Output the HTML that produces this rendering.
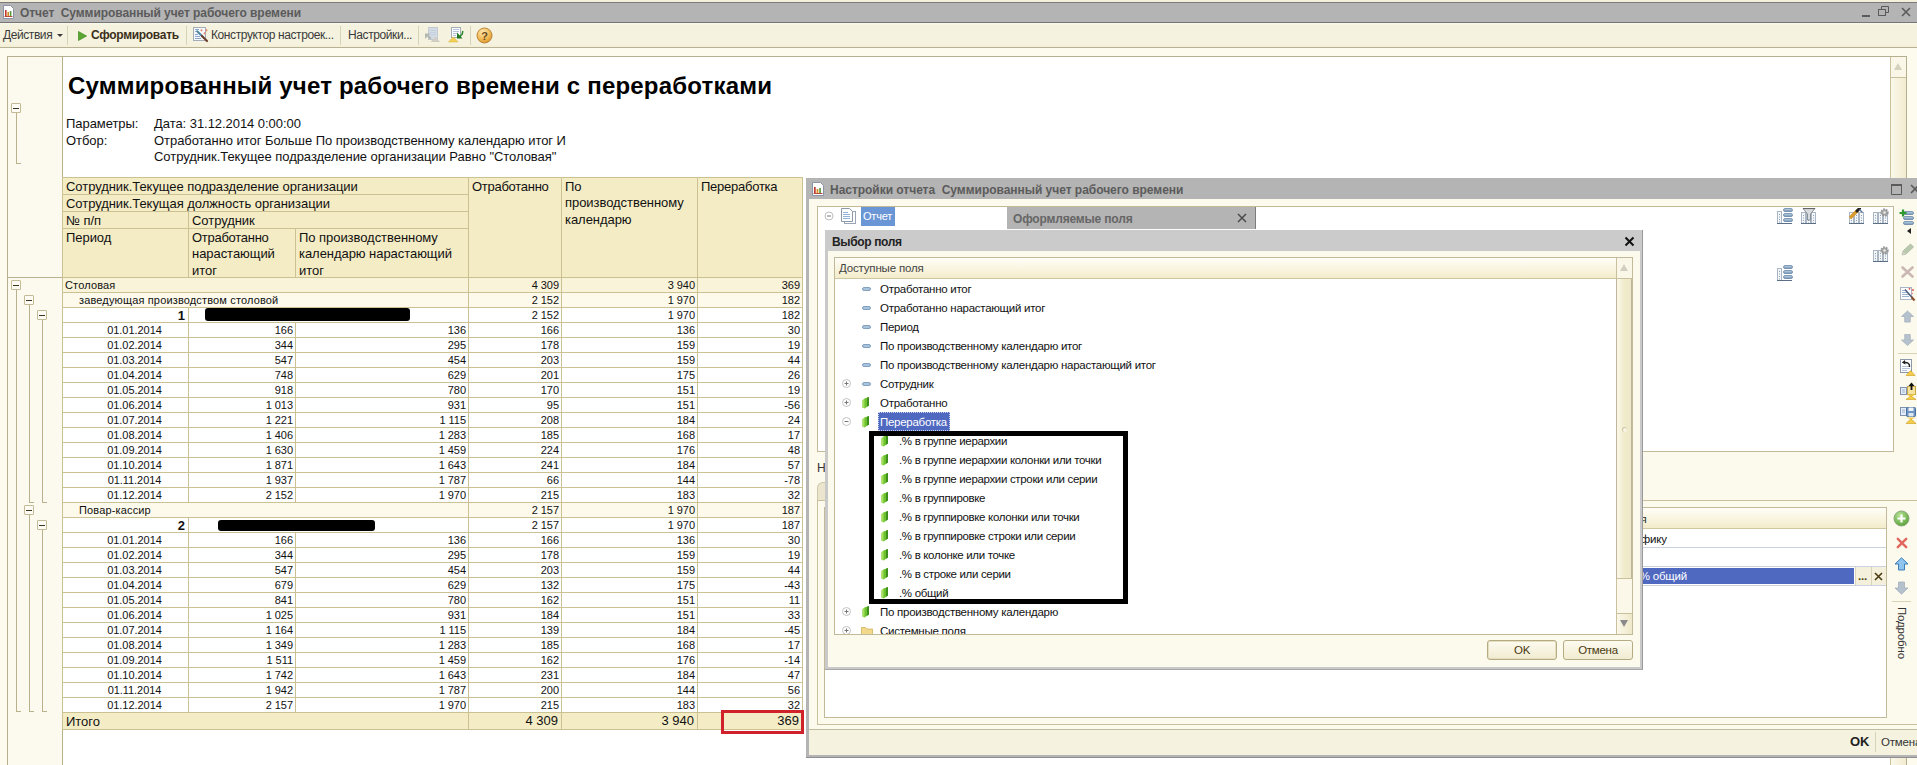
<!DOCTYPE html><html lang="ru"><head><meta charset="utf-8"><title>Отчет</title>
<style>
html,body{margin:0;padding:0}
body{width:1917px;height:765px;overflow:hidden;position:relative;background:#fcf9ed;font-family:"Liberation Sans","DejaVu Sans",sans-serif;font-size:11px;color:#000}
div,i,span,svg{position:absolute;display:block;box-sizing:border-box}
i.h{height:1px;z-index:2}
i.v{width:1px;z-index:2}
.ui{font-family:"Liberation Sans","DejaVu Sans",sans-serif;font-size:11.5px;letter-spacing:-0.17px;white-space:nowrap;color:#2b2b2b;line-height:14px}
#rep{left:0;top:0;width:1917px;height:765px}
.hd{background:#f4ecc5;z-index:1}
.bg{z-index:1}
.ht{z-index:3;font-size:13px;line-height:16.3px;white-space:nowrap;color:#111;letter-spacing:-0.05px}
.t{z-index:3;font-size:11px;line-height:13px;white-space:nowrap;color:#111;letter-spacing:0.15px}
.n{z-index:3;font-size:11px;line-height:13px;white-space:nowrap;text-align:right;color:#111;letter-spacing:-0.05px}
.nb{z-index:3;font-size:13px;line-height:13px;font-weight:bold;white-space:nowrap;text-align:right;color:#111}
.d{z-index:3;font-size:11px;line-height:13px;white-space:nowrap;text-align:center;padding-left:19px;color:#111;letter-spacing:-0.05px}
.tn{z-index:3;font-size:13px;line-height:16px;white-space:nowrap;text-align:right;color:#111}
.blk{z-index:3;background:#000;border-radius:3px}
.red{z-index:3;border:3px solid #d0222a}
.box{width:10px;height:10px;border:1px solid #c3ba96;background:#fdfbf3;border-radius:1px}
.box:after{content:"";position:absolute;left:1px;top:4px;width:6px;height:1px;background:#3a3520}
.tl{background:#b9b08c}
.f{font-size:11.5px;letter-spacing:-0.27px}

</style></head><body>
<!-- main window title bar -->
<div style="left:0;top:0;width:1917px;height:2px;background:#f3efda"></div>
<div style="left:0;top:2px;width:1917px;height:21px;background:#b4b4b4;border-top:1px solid #7a7a7a;border-bottom:1px solid #767676"></div>
<svg style="left:3px;top:5px" width="11" height="14" viewBox="0 0 11 14"><path d="M0.5 0.5h7l3 3v10h-10z" fill="#fff" stroke="#8a93a8"/><rect x="2" y="5" width="1.6" height="6" fill="#c0392b"/><rect x="4.4" y="7" width="1.6" height="4" fill="#d98b1e"/><rect x="6.8" y="6" width="1.6" height="5" fill="#5a9a3c"/><rect x="1.5" y="11" width="8" height="1" fill="#b84a3a"/></svg>
<div class="ui" style="left:20px;top:6px;font-size:12px;color:#5b5b5b;font-weight:bold;letter-spacing:-0.07px">Отчет&nbsp; Суммированный учет рабочего времени</div>
<!-- window buttons -->
<div style="left:1862px;top:15px;width:8px;height:2px;background:#5a5a5a"></div>
<svg style="left:1878px;top:6px" width="12" height="11" viewBox="0 0 12 11"><path d="M3.5 0.5h7v6h-7z M0.5 3.5h7v6h-7z" fill="none" stroke="#5a5a5a"/><rect x="1" y="4" width="6" height="5" fill="#b4b4b4"/><path d="M0.5 3.5h7v6h-7z" fill="none" stroke="#5a5a5a"/></svg>
<svg style="left:1901px;top:7px" width="10" height="10" viewBox="0 0 10 10"><path d="M1 1l8 8M9 1l-8 8" stroke="#5a5a5a" stroke-width="1.6"/></svg>
<!-- toolbar -->
<div style="left:0;top:23px;width:1917px;height:25px;background:linear-gradient(#fbf9ee 0,#f5f3df 2px,#f5f3df 20px,#f4efd9 24px);border-bottom:1px solid #b7b293"></div>
<div class="ui" style="left:3px;top:28px;color:#3a3a3a;font-size:12px;letter-spacing:-0.42px">Действия</div>
<div style="left:57px;top:34px;width:0;height:0;border-left:3px solid transparent;border-right:3px solid transparent;border-top:3px solid #3a3a3a"></div>
<i class="v" style="left:67px;top:26px;height:19px;background:#d8d2b6"></i>
<svg style="left:78px;top:31px" width="9" height="10" viewBox="0 0 10 11"><path d="M0.5 0.5l9 5l-9 5z" fill="#5aa832" stroke="#3f8a22" stroke-width="0.8"/></svg>
<div class="ui" style="left:91px;top:28px;font-weight:bold;color:#3b2f1a;font-size:12px;letter-spacing:-0.3px">Сформировать</div>
<i class="v" style="left:186px;top:26px;height:19px;background:#d8d2b6"></i>
<svg style="left:192px;top:26px" width="17" height="17" viewBox="0 0 17 17"><rect x="1.500" y="1.500" width="12" height="13" fill="#f6f9fc" stroke="#a3adb8"/><path d="M3 3.500h4M3 5.500h1.500M3 8.500h3M3 10.500h5M3 12.500h6" stroke="#8ea6cc" stroke-width="1"/><path d="M5.200 5.200l5 5" stroke="#4f86a0" stroke-width="2" stroke-linecap="round"/><path d="M10 10l5 5" stroke="#6b4030" stroke-width="2.200" stroke-linecap="round"/><path d="M9.500 3.200v2.200M8.400 4.300h2.200M14.500 3.200v2.200M13.400 4.300h2.200M12.500 6.200v2.200M11.400 7.300h2.200" stroke="#e8846c" stroke-width="0.900"/></svg>
<div class="ui" style="left:211px;top:28px;color:#3a3a3a;font-size:12px;letter-spacing:-0.4px">Конструктор настроек...</div>
<i class="v" style="left:340px;top:26px;height:19px;background:#d8d2b6"></i>
<div class="ui" style="left:348px;top:28px;color:#3a3a3a;font-size:12px;letter-spacing:-0.4px">Настройки...</div>
<i class="v" style="left:418px;top:26px;height:19px;background:#d8d2b6"></i>
<svg style="left:424px;top:26px" width="17" height="17" viewBox="0 0 17 17"><rect x="4.500" y="1.500" width="9" height="12" fill="#d3dbe4" stroke="#c3c9d0"/><path d="M6 4.500h6M6 6.500h6M6 8.500h6" stroke="#c4d0de"/><path d="M1 7.500h5.500l-1.800 1.800l2.800 2.800l-1.500 1.500l-2.800-2.800l-2.200 2.200z" fill="#b3b8b3"/><path d="M6.500 16l4.800-5.200l4.800 5.200z" fill="#cfccc2"/></svg>
<svg style="left:448px;top:26px" width="17" height="17" viewBox="0 0 17 17"><rect x="3.500" y="1.500" width="9" height="10" fill="#fbfcfe" stroke="#a3adb8"/><path d="M5 3.500h6M5 5.500h6M5 7.500h4M5 9.500h3" stroke="#b8c4dc"/><path d="M0.500 16l4.800-5.200l4.800 5.200z" fill="#f3cf55" stroke="#d9b23a" stroke-width="0.500"/><path d="M14.800 5l-0.600 3.200l-3 3" stroke="#2f8a2f" stroke-width="1.600" fill="none"/><path d="M9 6.500l5.500 6h-5.500z" fill="#1f7a1f"/></svg>
<i class="v" style="left:470px;top:26px;height:19px;background:#d8d2b6"></i>
<svg style="left:476px;top:27px" width="17" height="17" viewBox="0 0 17 17"><defs><radialGradient id="qg" cx="0.4" cy="0.3" r="0.8"><stop offset="0" stop-color="#fde9b5"/><stop offset="0.6" stop-color="#f0b64e"/><stop offset="1" stop-color="#d18a25"/></radialGradient></defs><circle cx="8.500" cy="8.500" r="7.500" fill="url(#qg)" stroke="#b9853a"/><text x="8.500" y="12.500" font-family="Liberation Sans, sans-serif" font-size="11" font-weight="bold" text-anchor="middle" fill="#6b4a1a">?</text></svg>
<!-- area between toolbar and panel -->
<div style="left:0;top:48px;width:1917px;height:717px;background:#fdfaee"></div>
<!-- report panel -->
<div style="left:7px;top:56px;width:1900px;height:720px;border:1px solid #b5af92;background:#fff"></div>
<div style="left:8px;top:57px;width:54px;height:708px;background:#fcf9ee"></div>
<i class="v" style="left:62px;top:57px;height:708px;background:#b9b08c"></i>
<i class="h" style="left:8px;top:277px;width:54px;background:#b9b08c"></i>
<!-- vertical scrollbar of report -->
<div style="left:1890px;top:57px;width:16px;height:708px;background:linear-gradient(90deg,#fbf8ea,#f1ebcf);border-left:1px solid #c9c19e"></div>
<div style="left:1890px;top:57px;width:16px;height:21px;background:#faf7e9;border-left:1px solid #c9c19e;border-bottom:1px solid #c9c19e"></div>
<div style="left:1894px;top:63px;width:0;height:0;border-left:4px solid transparent;border-right:4px solid transparent;border-bottom:7px solid #d6d1bd"></div>
<!-- report title -->
<div style="left:68px;top:72px;font-size:24px;line-height:28px;font-weight:bold;white-space:nowrap;color:#000;letter-spacing:0.19px">Суммированный учет рабочего времени с переработками</div>
<div class="ht" style="left:66px;top:116px">Параметры:</div>
<div class="ht" style="left:154px;top:116px">Дата: 31.12.2014 0:00:00</div>
<div class="ht" style="left:66px;top:133px">Отбор:</div>
<div class="ht" style="left:154px;top:133px">Отработанно итог Больше По производственному календарю итог И<br>Сотрудник.Текущее подразделение организации Равно "Столовая"</div>
<!-- gutter tree -->
<div class="box" style="left:11px;top:103px"></div>
<i class="v tl" style="left:16px;top:113px;height:51px"></i><i class="h tl" style="left:16px;top:163px;width:5px"></i>
<div class="box" style="left:11px;top:280px"></div>
<i class="v tl" style="left:16px;top:290px;height:422px"></i><i class="h tl" style="left:16px;top:711px;width:5px"></i>
<div class="box" style="left:24px;top:295px"></div>
<i class="v tl" style="left:29px;top:305px;height:198px"></i><i class="h tl" style="left:29px;top:502px;width:5px"></i>
<div class="box" style="left:37px;top:310px"></div>
<i class="v tl" style="left:42px;top:320px;height:183px"></i><i class="h tl" style="left:42px;top:502px;width:5px"></i>
<div class="box" style="left:24px;top:505px"></div>
<i class="v tl" style="left:29px;top:515px;height:197px"></i><i class="h tl" style="left:29px;top:711px;width:5px"></i>
<div class="box" style="left:37px;top:520px"></div>
<i class="v tl" style="left:42px;top:530px;height:182px"></i><i class="h tl" style="left:42px;top:711px;width:5px"></i>

<div id="rep">
<div class="hd" style="left:62px;top:177px;width:740px;height:100px"></div>
<i class="h" style="left:62px;top:177px;width:741px;background:#cbc193"></i>
<i class="h" style="left:62px;top:194px;width:406px;background:#cbc193"></i>
<i class="h" style="left:62px;top:211px;width:406px;background:#cbc193"></i>
<i class="h" style="left:62px;top:228px;width:406px;background:#cbc193"></i>
<i class="h" style="left:62px;top:277px;width:741px;background:#cbc193"></i>
<i class="v" style="left:62px;top:177px;height:553px;background:#cbc193"></i>
<i class="v" style="left:188px;top:211px;height:66px;background:#cbc193"></i>
<i class="v" style="left:295px;top:228px;height:49px;background:#cbc193"></i>
<i class="v" style="left:468px;top:177px;height:553px;background:#cbc193"></i>
<i class="v" style="left:561px;top:177px;height:553px;background:#cbc193"></i>
<i class="v" style="left:697px;top:177px;height:553px;background:#cbc193"></i>
<i class="v" style="left:802px;top:177px;height:553px;background:#cbc193"></i>
<div class="ht" style="left:66px;top:179px;">Сотрудник.Текущее подразделение организации</div>
<div class="ht" style="left:66px;top:196px;">Сотрудник.Текущая должность организации</div>
<div class="ht" style="left:66px;top:213px;">№ п/п</div>
<div class="ht" style="left:192px;top:213px;">Сотрудник</div>
<div class="ht" style="left:66px;top:230px;">Период</div>
<div class="ht" style="left:192px;top:230px;"><span style="position:static;display:inline;letter-spacing:-0.27px">Отработанно</span><br>нарастающий<br>итог</div>
<div class="ht" style="left:299px;top:230px;">По производственному<br>календарю нарастающий<br>итог</div>
<div class="ht" style="left:472px;top:179px;letter-spacing:-0.27px;">Отработанно</div>
<div class="ht" style="left:565px;top:179px;">По<br>производственному<br>календарю</div>
<div class="ht" style="left:701px;top:179px;letter-spacing:-0.25px;">Переработка</div>
<div class="bg" style="left:62px;top:277px;width:740px;height:15px;background:#f9f3d9"></div>
<div class="t" style="left:65px;top:279px">Столовая</div>
<div class="n" style="left:439px;top:279px;width:120px">4 309</div>
<div class="n" style="left:575px;top:279px;width:120px">3 940</div>
<div class="n" style="left:680px;top:279px;width:120px">369</div>
<i class="h" style="left:62px;top:292px;width:741px;background:#cbc193"></i>
<div class="bg" style="left:62px;top:292px;width:740px;height:15px;background:#fdfaec"></div>
<div class="t" style="left:79px;top:294px">заведующая производством столовой</div>
<div class="n" style="left:439px;top:294px;width:120px">2 152</div>
<div class="n" style="left:575px;top:294px;width:120px">1 970</div>
<div class="n" style="left:680px;top:294px;width:120px">182</div>
<i class="h" style="left:62px;top:307px;width:741px;background:#cbc193"></i>
<div class="nb" style="left:65px;top:309px;width:120px">1</div>
<div class="blk" style="left:205px;top:308px;width:205px;height:13px"></div>
<div class="n" style="left:439px;top:309px;width:120px">2 152</div>
<div class="n" style="left:575px;top:309px;width:120px">1 970</div>
<div class="n" style="left:680px;top:309px;width:120px">182</div>
<i class="h" style="left:62px;top:322px;width:741px;background:#cbc193"></i>
<i class="v" style="left:188px;top:307px;height:15px;background:#cbc193"></i>
<div class="d" style="left:62px;top:324px;width:126px">01.01.2014</div>
<div class="n" style="left:173px;top:324px;width:120px">166</div>
<div class="n" style="left:346px;top:324px;width:120px">136</div>
<div class="n" style="left:439px;top:324px;width:120px">166</div>
<div class="n" style="left:575px;top:324px;width:120px">136</div>
<div class="n" style="left:680px;top:324px;width:120px">30</div>
<i class="h" style="left:62px;top:337px;width:741px;background:#cbc193"></i>
<i class="v" style="left:188px;top:322px;height:15px;background:#cbc193"></i>
<i class="v" style="left:295px;top:322px;height:15px;background:#cbc193"></i>
<div class="d" style="left:62px;top:339px;width:126px">01.02.2014</div>
<div class="n" style="left:173px;top:339px;width:120px">344</div>
<div class="n" style="left:346px;top:339px;width:120px">295</div>
<div class="n" style="left:439px;top:339px;width:120px">178</div>
<div class="n" style="left:575px;top:339px;width:120px">159</div>
<div class="n" style="left:680px;top:339px;width:120px">19</div>
<i class="h" style="left:62px;top:352px;width:741px;background:#cbc193"></i>
<i class="v" style="left:188px;top:337px;height:15px;background:#cbc193"></i>
<i class="v" style="left:295px;top:337px;height:15px;background:#cbc193"></i>
<div class="d" style="left:62px;top:354px;width:126px">01.03.2014</div>
<div class="n" style="left:173px;top:354px;width:120px">547</div>
<div class="n" style="left:346px;top:354px;width:120px">454</div>
<div class="n" style="left:439px;top:354px;width:120px">203</div>
<div class="n" style="left:575px;top:354px;width:120px">159</div>
<div class="n" style="left:680px;top:354px;width:120px">44</div>
<i class="h" style="left:62px;top:367px;width:741px;background:#cbc193"></i>
<i class="v" style="left:188px;top:352px;height:15px;background:#cbc193"></i>
<i class="v" style="left:295px;top:352px;height:15px;background:#cbc193"></i>
<div class="d" style="left:62px;top:369px;width:126px">01.04.2014</div>
<div class="n" style="left:173px;top:369px;width:120px">748</div>
<div class="n" style="left:346px;top:369px;width:120px">629</div>
<div class="n" style="left:439px;top:369px;width:120px">201</div>
<div class="n" style="left:575px;top:369px;width:120px">175</div>
<div class="n" style="left:680px;top:369px;width:120px">26</div>
<i class="h" style="left:62px;top:382px;width:741px;background:#cbc193"></i>
<i class="v" style="left:188px;top:367px;height:15px;background:#cbc193"></i>
<i class="v" style="left:295px;top:367px;height:15px;background:#cbc193"></i>
<div class="d" style="left:62px;top:384px;width:126px">01.05.2014</div>
<div class="n" style="left:173px;top:384px;width:120px">918</div>
<div class="n" style="left:346px;top:384px;width:120px">780</div>
<div class="n" style="left:439px;top:384px;width:120px">170</div>
<div class="n" style="left:575px;top:384px;width:120px">151</div>
<div class="n" style="left:680px;top:384px;width:120px">19</div>
<i class="h" style="left:62px;top:397px;width:741px;background:#cbc193"></i>
<i class="v" style="left:188px;top:382px;height:15px;background:#cbc193"></i>
<i class="v" style="left:295px;top:382px;height:15px;background:#cbc193"></i>
<div class="d" style="left:62px;top:399px;width:126px">01.06.2014</div>
<div class="n" style="left:173px;top:399px;width:120px">1 013</div>
<div class="n" style="left:346px;top:399px;width:120px">931</div>
<div class="n" style="left:439px;top:399px;width:120px">95</div>
<div class="n" style="left:575px;top:399px;width:120px">151</div>
<div class="n" style="left:680px;top:399px;width:120px">-56</div>
<i class="h" style="left:62px;top:412px;width:741px;background:#cbc193"></i>
<i class="v" style="left:188px;top:397px;height:15px;background:#cbc193"></i>
<i class="v" style="left:295px;top:397px;height:15px;background:#cbc193"></i>
<div class="d" style="left:62px;top:414px;width:126px">01.07.2014</div>
<div class="n" style="left:173px;top:414px;width:120px">1 221</div>
<div class="n" style="left:346px;top:414px;width:120px">1 115</div>
<div class="n" style="left:439px;top:414px;width:120px">208</div>
<div class="n" style="left:575px;top:414px;width:120px">184</div>
<div class="n" style="left:680px;top:414px;width:120px">24</div>
<i class="h" style="left:62px;top:427px;width:741px;background:#cbc193"></i>
<i class="v" style="left:188px;top:412px;height:15px;background:#cbc193"></i>
<i class="v" style="left:295px;top:412px;height:15px;background:#cbc193"></i>
<div class="d" style="left:62px;top:429px;width:126px">01.08.2014</div>
<div class="n" style="left:173px;top:429px;width:120px">1 406</div>
<div class="n" style="left:346px;top:429px;width:120px">1 283</div>
<div class="n" style="left:439px;top:429px;width:120px">185</div>
<div class="n" style="left:575px;top:429px;width:120px">168</div>
<div class="n" style="left:680px;top:429px;width:120px">17</div>
<i class="h" style="left:62px;top:442px;width:741px;background:#cbc193"></i>
<i class="v" style="left:188px;top:427px;height:15px;background:#cbc193"></i>
<i class="v" style="left:295px;top:427px;height:15px;background:#cbc193"></i>
<div class="d" style="left:62px;top:444px;width:126px">01.09.2014</div>
<div class="n" style="left:173px;top:444px;width:120px">1 630</div>
<div class="n" style="left:346px;top:444px;width:120px">1 459</div>
<div class="n" style="left:439px;top:444px;width:120px">224</div>
<div class="n" style="left:575px;top:444px;width:120px">176</div>
<div class="n" style="left:680px;top:444px;width:120px">48</div>
<i class="h" style="left:62px;top:457px;width:741px;background:#cbc193"></i>
<i class="v" style="left:188px;top:442px;height:15px;background:#cbc193"></i>
<i class="v" style="left:295px;top:442px;height:15px;background:#cbc193"></i>
<div class="d" style="left:62px;top:459px;width:126px">01.10.2014</div>
<div class="n" style="left:173px;top:459px;width:120px">1 871</div>
<div class="n" style="left:346px;top:459px;width:120px">1 643</div>
<div class="n" style="left:439px;top:459px;width:120px">241</div>
<div class="n" style="left:575px;top:459px;width:120px">184</div>
<div class="n" style="left:680px;top:459px;width:120px">57</div>
<i class="h" style="left:62px;top:472px;width:741px;background:#cbc193"></i>
<i class="v" style="left:188px;top:457px;height:15px;background:#cbc193"></i>
<i class="v" style="left:295px;top:457px;height:15px;background:#cbc193"></i>
<div class="d" style="left:62px;top:474px;width:126px">01.11.2014</div>
<div class="n" style="left:173px;top:474px;width:120px">1 937</div>
<div class="n" style="left:346px;top:474px;width:120px">1 787</div>
<div class="n" style="left:439px;top:474px;width:120px">66</div>
<div class="n" style="left:575px;top:474px;width:120px">144</div>
<div class="n" style="left:680px;top:474px;width:120px">-78</div>
<i class="h" style="left:62px;top:487px;width:741px;background:#cbc193"></i>
<i class="v" style="left:188px;top:472px;height:15px;background:#cbc193"></i>
<i class="v" style="left:295px;top:472px;height:15px;background:#cbc193"></i>
<div class="d" style="left:62px;top:489px;width:126px">01.12.2014</div>
<div class="n" style="left:173px;top:489px;width:120px">2 152</div>
<div class="n" style="left:346px;top:489px;width:120px">1 970</div>
<div class="n" style="left:439px;top:489px;width:120px">215</div>
<div class="n" style="left:575px;top:489px;width:120px">183</div>
<div class="n" style="left:680px;top:489px;width:120px">32</div>
<i class="h" style="left:62px;top:502px;width:741px;background:#cbc193"></i>
<i class="v" style="left:188px;top:487px;height:15px;background:#cbc193"></i>
<i class="v" style="left:295px;top:487px;height:15px;background:#cbc193"></i>
<div class="bg" style="left:62px;top:502px;width:740px;height:15px;background:#fdfaec"></div>
<div class="t" style="left:79px;top:504px">Повар-кассир</div>
<div class="n" style="left:439px;top:504px;width:120px">2 157</div>
<div class="n" style="left:575px;top:504px;width:120px">1 970</div>
<div class="n" style="left:680px;top:504px;width:120px">187</div>
<i class="h" style="left:62px;top:517px;width:741px;background:#cbc193"></i>
<div class="nb" style="left:65px;top:519px;width:120px">2</div>
<div class="blk" style="left:218px;top:520px;width:157px;height:11px"></div>
<div class="n" style="left:439px;top:519px;width:120px">2 157</div>
<div class="n" style="left:575px;top:519px;width:120px">1 970</div>
<div class="n" style="left:680px;top:519px;width:120px">187</div>
<i class="h" style="left:62px;top:532px;width:741px;background:#cbc193"></i>
<i class="v" style="left:188px;top:517px;height:15px;background:#cbc193"></i>
<div class="d" style="left:62px;top:534px;width:126px">01.01.2014</div>
<div class="n" style="left:173px;top:534px;width:120px">166</div>
<div class="n" style="left:346px;top:534px;width:120px">136</div>
<div class="n" style="left:439px;top:534px;width:120px">166</div>
<div class="n" style="left:575px;top:534px;width:120px">136</div>
<div class="n" style="left:680px;top:534px;width:120px">30</div>
<i class="h" style="left:62px;top:547px;width:741px;background:#cbc193"></i>
<i class="v" style="left:188px;top:532px;height:15px;background:#cbc193"></i>
<i class="v" style="left:295px;top:532px;height:15px;background:#cbc193"></i>
<div class="d" style="left:62px;top:549px;width:126px">01.02.2014</div>
<div class="n" style="left:173px;top:549px;width:120px">344</div>
<div class="n" style="left:346px;top:549px;width:120px">295</div>
<div class="n" style="left:439px;top:549px;width:120px">178</div>
<div class="n" style="left:575px;top:549px;width:120px">159</div>
<div class="n" style="left:680px;top:549px;width:120px">19</div>
<i class="h" style="left:62px;top:562px;width:741px;background:#cbc193"></i>
<i class="v" style="left:188px;top:547px;height:15px;background:#cbc193"></i>
<i class="v" style="left:295px;top:547px;height:15px;background:#cbc193"></i>
<div class="d" style="left:62px;top:564px;width:126px">01.03.2014</div>
<div class="n" style="left:173px;top:564px;width:120px">547</div>
<div class="n" style="left:346px;top:564px;width:120px">454</div>
<div class="n" style="left:439px;top:564px;width:120px">203</div>
<div class="n" style="left:575px;top:564px;width:120px">159</div>
<div class="n" style="left:680px;top:564px;width:120px">44</div>
<i class="h" style="left:62px;top:577px;width:741px;background:#cbc193"></i>
<i class="v" style="left:188px;top:562px;height:15px;background:#cbc193"></i>
<i class="v" style="left:295px;top:562px;height:15px;background:#cbc193"></i>
<div class="d" style="left:62px;top:579px;width:126px">01.04.2014</div>
<div class="n" style="left:173px;top:579px;width:120px">679</div>
<div class="n" style="left:346px;top:579px;width:120px">629</div>
<div class="n" style="left:439px;top:579px;width:120px">132</div>
<div class="n" style="left:575px;top:579px;width:120px">175</div>
<div class="n" style="left:680px;top:579px;width:120px">-43</div>
<i class="h" style="left:62px;top:592px;width:741px;background:#cbc193"></i>
<i class="v" style="left:188px;top:577px;height:15px;background:#cbc193"></i>
<i class="v" style="left:295px;top:577px;height:15px;background:#cbc193"></i>
<div class="d" style="left:62px;top:594px;width:126px">01.05.2014</div>
<div class="n" style="left:173px;top:594px;width:120px">841</div>
<div class="n" style="left:346px;top:594px;width:120px">780</div>
<div class="n" style="left:439px;top:594px;width:120px">162</div>
<div class="n" style="left:575px;top:594px;width:120px">151</div>
<div class="n" style="left:680px;top:594px;width:120px">11</div>
<i class="h" style="left:62px;top:607px;width:741px;background:#cbc193"></i>
<i class="v" style="left:188px;top:592px;height:15px;background:#cbc193"></i>
<i class="v" style="left:295px;top:592px;height:15px;background:#cbc193"></i>
<div class="d" style="left:62px;top:609px;width:126px">01.06.2014</div>
<div class="n" style="left:173px;top:609px;width:120px">1 025</div>
<div class="n" style="left:346px;top:609px;width:120px">931</div>
<div class="n" style="left:439px;top:609px;width:120px">184</div>
<div class="n" style="left:575px;top:609px;width:120px">151</div>
<div class="n" style="left:680px;top:609px;width:120px">33</div>
<i class="h" style="left:62px;top:622px;width:741px;background:#cbc193"></i>
<i class="v" style="left:188px;top:607px;height:15px;background:#cbc193"></i>
<i class="v" style="left:295px;top:607px;height:15px;background:#cbc193"></i>
<div class="d" style="left:62px;top:624px;width:126px">01.07.2014</div>
<div class="n" style="left:173px;top:624px;width:120px">1 164</div>
<div class="n" style="left:346px;top:624px;width:120px">1 115</div>
<div class="n" style="left:439px;top:624px;width:120px">139</div>
<div class="n" style="left:575px;top:624px;width:120px">184</div>
<div class="n" style="left:680px;top:624px;width:120px">-45</div>
<i class="h" style="left:62px;top:637px;width:741px;background:#cbc193"></i>
<i class="v" style="left:188px;top:622px;height:15px;background:#cbc193"></i>
<i class="v" style="left:295px;top:622px;height:15px;background:#cbc193"></i>
<div class="d" style="left:62px;top:639px;width:126px">01.08.2014</div>
<div class="n" style="left:173px;top:639px;width:120px">1 349</div>
<div class="n" style="left:346px;top:639px;width:120px">1 283</div>
<div class="n" style="left:439px;top:639px;width:120px">185</div>
<div class="n" style="left:575px;top:639px;width:120px">168</div>
<div class="n" style="left:680px;top:639px;width:120px">17</div>
<i class="h" style="left:62px;top:652px;width:741px;background:#cbc193"></i>
<i class="v" style="left:188px;top:637px;height:15px;background:#cbc193"></i>
<i class="v" style="left:295px;top:637px;height:15px;background:#cbc193"></i>
<div class="d" style="left:62px;top:654px;width:126px">01.09.2014</div>
<div class="n" style="left:173px;top:654px;width:120px">1 511</div>
<div class="n" style="left:346px;top:654px;width:120px">1 459</div>
<div class="n" style="left:439px;top:654px;width:120px">162</div>
<div class="n" style="left:575px;top:654px;width:120px">176</div>
<div class="n" style="left:680px;top:654px;width:120px">-14</div>
<i class="h" style="left:62px;top:667px;width:741px;background:#cbc193"></i>
<i class="v" style="left:188px;top:652px;height:15px;background:#cbc193"></i>
<i class="v" style="left:295px;top:652px;height:15px;background:#cbc193"></i>
<div class="d" style="left:62px;top:669px;width:126px">01.10.2014</div>
<div class="n" style="left:173px;top:669px;width:120px">1 742</div>
<div class="n" style="left:346px;top:669px;width:120px">1 643</div>
<div class="n" style="left:439px;top:669px;width:120px">231</div>
<div class="n" style="left:575px;top:669px;width:120px">184</div>
<div class="n" style="left:680px;top:669px;width:120px">47</div>
<i class="h" style="left:62px;top:682px;width:741px;background:#cbc193"></i>
<i class="v" style="left:188px;top:667px;height:15px;background:#cbc193"></i>
<i class="v" style="left:295px;top:667px;height:15px;background:#cbc193"></i>
<div class="d" style="left:62px;top:684px;width:126px">01.11.2014</div>
<div class="n" style="left:173px;top:684px;width:120px">1 942</div>
<div class="n" style="left:346px;top:684px;width:120px">1 787</div>
<div class="n" style="left:439px;top:684px;width:120px">200</div>
<div class="n" style="left:575px;top:684px;width:120px">144</div>
<div class="n" style="left:680px;top:684px;width:120px">56</div>
<i class="h" style="left:62px;top:697px;width:741px;background:#cbc193"></i>
<i class="v" style="left:188px;top:682px;height:15px;background:#cbc193"></i>
<i class="v" style="left:295px;top:682px;height:15px;background:#cbc193"></i>
<div class="d" style="left:62px;top:699px;width:126px">01.12.2014</div>
<div class="n" style="left:173px;top:699px;width:120px">2 157</div>
<div class="n" style="left:346px;top:699px;width:120px">1 970</div>
<div class="n" style="left:439px;top:699px;width:120px">215</div>
<div class="n" style="left:575px;top:699px;width:120px">183</div>
<div class="n" style="left:680px;top:699px;width:120px">32</div>
<i class="h" style="left:62px;top:712px;width:741px;background:#cbc193"></i>
<i class="v" style="left:188px;top:697px;height:15px;background:#cbc193"></i>
<i class="v" style="left:295px;top:697px;height:15px;background:#cbc193"></i>
<div class="bg" style="left:62px;top:712px;width:740px;height:17px;background:#f4ecc5"></div>
<div class="ht" style="left:66px;top:714px">Итого</div>
<div class="tn" style="left:438px;top:713px;width:120px">4 309</div>
<div class="tn" style="left:574px;top:713px;width:120px">3 940</div>
<div class="tn" style="left:679px;top:713px;width:120px">369</div>
<i class="h" style="left:62px;top:729px;width:741px;background:#cbc193"></i>
<div class="red" style="left:721px;top:710px;width:83px;height:24px"></div>
</div>
<!-- ============ settings dialog ============ -->
<div id="dlg" style="left:806px;top:178px;width:1120px;height:580px;background:#fcf9ed;border:3px solid #b4b4b4;z-index:10"></div>
<div style="left:806px;top:178px;width:1111px;height:21px;background:#b4b4b4;z-index:11"></div>
<svg style="left:812px;top:182px;z-index:12" width="12" height="14" viewBox="0 0 12 14"><path d="M0.5 0.5h8l3 3v10h-11z" fill="#fff" stroke="#8a93a8"/><rect x="2" y="5" width="1.700" height="6" fill="#c0392b"/><rect x="4.600" y="7" width="1.700" height="4" fill="#d98b1e"/><rect x="7.200" y="6" width="1.700" height="5" fill="#5a9a3c"/><rect x="1.500" y="11" width="9" height="1" fill="#b84a3a"/></svg>
<div class="ui" style="left:830px;top:183px;font-size:12px;color:#5b5b5b;font-weight:bold;letter-spacing:-0.03px;z-index:12">Настройки отчета&nbsp; Суммированный учет рабочего времени</div>
<svg style="left:1891px;top:184px;z-index:12" width="12" height="11" viewBox="0 0 12 11"><path d="M0.5 1h10v9.500h-10z" fill="none" stroke="#5a5a5a" stroke-width="1"/><path d="M0 1h11" stroke="#5a5a5a" stroke-width="2"/></svg>
<svg style="left:1910px;top:184px;z-index:12" width="10" height="10" viewBox="0 0 10 10"><path d="M1 1l8 8M9 1l-8 8" stroke="#5a5a5a" stroke-width="1.600"/></svg>

<!-- structure panel -->
<div style="left:817px;top:206px;width:1077px;height:246px;background:#fff;border:1px solid #c2b998;z-index:11"></div>
<!-- Отчет node -->
<svg style="left:824px;top:211px;z-index:12" width="10" height="10" viewBox="0 0 10 10"><circle cx="5" cy="5" r="4" fill="#fff" stroke="#bdbdbd"/><path d="M3 5h4" stroke="#777" stroke-width="1"/></svg>
<svg style="left:841px;top:208px;z-index:12" width="16" height="17" viewBox="0 0 16 17"><rect x="3.500" y="3.500" width="11" height="12" fill="#fff" stroke="#9aa4b4"/><path d="M0.500 0.500h8l3 3v10h-11z" fill="#fff" stroke="#8c97a8"/><path d="M2 4.500h5M2 6.500h7M2 8.500h7M2 10.500h7" stroke="#8fb0d8" stroke-width="1"/></svg>
<div style="left:861px;top:207px;width:34px;height:19px;background:#6b96d6;z-index:12"></div>
<div class="ui" style="left:863px;top:209px;color:#fff;z-index:13;font-size:11px;letter-spacing:-0.2px">Отчет</div>
<!-- tab Оформляемые поля -->
<div style="left:1007px;top:207px;width:249px;height:22px;background:#b4b4b4;border-right:1px solid #7d7d7d;z-index:12"></div>
<div class="ui" style="left:1013px;top:212px;font-size:12px;font-weight:bold;color:#666;letter-spacing:-0.17px;z-index:13">Оформляемые поля</div>
<svg style="left:1237px;top:213px;z-index:13" width="10" height="10" viewBox="0 0 10 10"><path d="M1 1l8 8M9 1l-8 8" stroke="#4a4a4a" stroke-width="1.500"/></svg>

<!-- label and lower tab page -->
<div class="ui" style="left:817px;top:461px;z-index:11;color:#333;font-size:12px">Настройки:</div>
<div style="left:817px;top:482px;width:90px;height:19px;background:#ebe5cd;border:1px solid #cfc8a8;border-bottom:none;border-radius:6px 6px 0 0;z-index:11"></div>
<div style="left:817px;top:500px;width:1110px;height:225px;border:1px solid #c9c19e;background:#fcf9ed;z-index:11"></div>
<div style="left:824px;top:507px;width:1063px;height:211px;background:#fff;border:1px solid #c2b998;z-index:12"></div>
<!-- lower table header + rows (visible right of dialog) -->
<div style="left:825px;top:508px;width:1061px;height:21px;background:linear-gradient(#fffef8,#f3eccb);border-bottom:1px solid #cfc7a2;z-index:13"></div>
<div class="ui" style="left:1597px;top:512px;z-index:13;color:#333">Значения</div>
<div class="ui" style="left:1607px;top:532px;z-index:13;color:#111">По графику</div>
<i class="h" style="left:825px;top:547px;width:1061px;background:#c9d3df;z-index:13"></i>
<i class="h" style="left:825px;top:566px;width:1061px;background:#c9d3df;z-index:13"></i>
<div style="left:825px;top:568px;width:1029px;height:16px;background:#4f68c0;z-index:13"></div>
<div class="ui" style="left:1569px;top:569px;z-index:14;color:#fff;letter-spacing:-0.2px">Переработка.% общий</div>
<div style="left:1855px;top:567px;width:16px;height:18px;background:#f4f0dc;border-left:1px solid #d9d3b8;z-index:13"></div>
<div style="left:1871px;top:567px;width:15px;height:18px;background:#f4f0dc;border-left:1px solid #d9d3b8;z-index:13"></div>
<div class="ui" style="left:1858px;top:569px;z-index:14;font-weight:bold;color:#4a3a10">...</div>
<svg style="left:1874px;top:572px;z-index:14" width="9" height="9" viewBox="0 0 9 9"><path d="M1 1l7 7M8 1l-7 7" stroke="#4a3a10" stroke-width="1.600"/></svg>
<i class="h" style="left:825px;top:585px;width:1061px;background:#c9d3df;z-index:13"></i>

<!-- bottom bar -->
<i class="h" style="left:806px;top:757px;width:1111px;background:#8f8f8f;z-index:12"></i>
<div style="left:809px;top:729px;width:1108px;height:26px;background:#f5f3e0;border-top:1px solid #c2bc9c;z-index:11"></div>
<div class="ui" style="left:1850px;top:735px;z-index:12;font-weight:bold;font-size:13px;color:#222">OK</div>
<i class="v" style="left:1875px;top:732px;height:20px;background:#d8d2b6;z-index:12"></i>
<div class="ui" style="left:1881px;top:735px;z-index:12;color:#333">Отмена</div>

<!-- ============ field chooser dialog ============ -->
<div style="left:825px;top:230px;width:818px;height:440px;background:#fcf9ed;border:3px solid #c9c9c9;border-top:none;z-index:20"></div>
<div style="left:825px;top:230px;width:818px;height:21px;background:#cbcbcb;z-index:21"></div>
<div class="ui" style="left:832px;top:235px;font-size:12px;font-weight:bold;color:#222;letter-spacing:-0.36px;z-index:22">Выбор поля</div>
<i class="v" style="left:1642px;top:230px;height:440px;background:#9a9a9a;z-index:22"></i>
<i class="h" style="left:825px;top:669px;width:818px;background:#a6a6a6;z-index:22"></i>
<svg style="left:1624px;top:236px;z-index:22" width="11" height="11" viewBox="0 0 11 11"><path d="M1.500 1.500l8 8M9.500 1.500l-8 8" stroke="#111" stroke-width="2"/></svg>
<div style="left:834px;top:257px;width:799px;height:378px;background:#fff;border:1px solid #c2b998;z-index:21"></div>
<div style="left:835px;top:258px;width:781px;height:21px;background:linear-gradient(#fffef8,#f3eccb);border-bottom:1px solid #cfc7a2;z-index:22"></div>
<div class="ui" style="left:839px;top:261px;color:#444;z-index:23">Доступные поля</div>
<div style="left:1616px;top:258px;width:16px;height:376px;background:#fbf8ea;border-left:1px solid #c9c19e;z-index:22"></div>
<div style="left:1616px;top:258px;width:16px;height:21px;background:#faf7e9;border-left:1px solid #c9c19e;border-bottom:1px solid #c9c19e;z-index:23"></div>
<div style="left:1620px;top:264px;width:0;height:0;border-left:4px solid transparent;border-right:4px solid transparent;border-bottom:7px solid #d3cfc0;z-index:24"></div>
<div style="left:1616px;top:279px;width:16px;height:300px;background:linear-gradient(90deg,#fbf8ea,#f0ebca 55%,#efe9c9);border-left:1px solid #bdb69a;border-right:1px solid #bdb69a;border-bottom:1px solid #c9c19e;z-index:23"></div>
<div style="left:1622px;top:427px;width:5px;height:5px;border-radius:3px;background:#f8f5e3;border-left:1px solid #cdc7ac;border-top:1px solid #cdc7ac;z-index:24"></div>
<div style="left:1616px;top:613px;width:16px;height:21px;background:linear-gradient(90deg,#fbf8ea,#efe8c9);border-left:1px solid #c9c19e;border-top:1px solid #c9c19e;z-index:23"></div>
<div style="left:1620px;top:620px;width:0;height:0;border-left:4px solid transparent;border-right:4px solid transparent;border-top:7px solid #8a8a8a;z-index:24"></div>
<svg style="left:862px;top:287px;z-index:23" width="9" height="5" viewBox="0 0 9 5"><rect x="0.500" y="0.500" width="8" height="3" rx="1.500" fill="#a9c4dd" stroke="#6f8fb0" stroke-width="0.800"/></svg>
<div class="ui f" style="left:880px;top:282px;color:#111;z-index:24">Отработанно итог</div>
<svg style="left:862px;top:306px;z-index:23" width="9" height="5" viewBox="0 0 9 5"><rect x="0.500" y="0.500" width="8" height="3" rx="1.500" fill="#a9c4dd" stroke="#6f8fb0" stroke-width="0.800"/></svg>
<div class="ui f" style="left:880px;top:301px;color:#111;z-index:24">Отработанно нарастающий итог</div>
<svg style="left:862px;top:325px;z-index:23" width="9" height="5" viewBox="0 0 9 5"><rect x="0.500" y="0.500" width="8" height="3" rx="1.500" fill="#a9c4dd" stroke="#6f8fb0" stroke-width="0.800"/></svg>
<div class="ui f" style="left:880px;top:320px;color:#111;z-index:24">Период</div>
<svg style="left:862px;top:344px;z-index:23" width="9" height="5" viewBox="0 0 9 5"><rect x="0.500" y="0.500" width="8" height="3" rx="1.500" fill="#a9c4dd" stroke="#6f8fb0" stroke-width="0.800"/></svg>
<div class="ui f" style="left:880px;top:339px;color:#111;z-index:24">По производственному календарю итог</div>
<svg style="left:862px;top:363px;z-index:23" width="9" height="5" viewBox="0 0 9 5"><rect x="0.500" y="0.500" width="8" height="3" rx="1.500" fill="#a9c4dd" stroke="#6f8fb0" stroke-width="0.800"/></svg>
<div class="ui f" style="left:880px;top:358px;color:#111;z-index:24">По производственному календарю нарастающий итог</div>
<svg style="left:842px;top:379px;z-index:23" width="9" height="9" viewBox="0 0 9 9"><circle cx="4.500" cy="4.500" r="4" fill="#fff" stroke="#bcbcbc" stroke-width="0.900"/><path d="M2.500 4.500h4M4.500 2.500v4" stroke="#777" stroke-width="1"/></svg>
<svg style="left:862px;top:382px;z-index:23" width="9" height="5" viewBox="0 0 9 5"><rect x="0.500" y="0.500" width="8" height="3" rx="1.500" fill="#a9c4dd" stroke="#6f8fb0" stroke-width="0.800"/></svg>
<div class="ui f" style="left:880px;top:377px;color:#111;z-index:24">Сотрудник</div>
<svg style="left:842px;top:398px;z-index:23" width="9" height="9" viewBox="0 0 9 9"><circle cx="4.500" cy="4.500" r="4" fill="#fff" stroke="#bcbcbc" stroke-width="0.900"/><path d="M2.500 4.500h4M4.500 2.500v4" stroke="#777" stroke-width="1"/></svg>
<svg style="left:862px;top:397px;z-index:23" width="8" height="12" viewBox="0 0 8 12"><path d="M2.500 1.500l4.500-1.500v8.500l-4.500 3l-2-1v-7z" fill="#6cc12f"/><path d="M5 0.700l2-0.700v8.500l-2 1.300z" fill="#3f8f1c"/><path d="M0.500 3.500l2-2v9.800l-2-0.900z" fill="#a5e05e"/></svg>
<div class="ui f" style="left:880px;top:396px;color:#111;z-index:24">Отработанно</div>
<svg style="left:842px;top:417px;z-index:23" width="9" height="9" viewBox="0 0 9 9"><circle cx="4.500" cy="4.500" r="4" fill="#fff" stroke="#bcbcbc" stroke-width="0.900"/><path d="M2.500 4.500h4" stroke="#777" stroke-width="1"/></svg>
<svg style="left:862px;top:416px;z-index:23" width="8" height="12" viewBox="0 0 8 12"><path d="M2.500 1.500l4.500-1.500v8.500l-4.500 3l-2-1v-7z" fill="#6cc12f"/><path d="M5 0.700l2-0.700v8.500l-2 1.300z" fill="#3f8f1c"/><path d="M0.500 3.500l2-2v9.800l-2-0.900z" fill="#a5e05e"/></svg>
<div style="left:878px;top:412px;width:72px;height:19px;background:#4f68c0;border:1px dotted #c9d2f0;z-index:23"></div>
<div class="ui f" style="left:880px;top:415px;color:#fff;z-index:24">Переработка</div>
<svg style="left:881px;top:435px;z-index:23" width="8" height="12" viewBox="0 0 8 12"><path d="M2.500 1.500l4.500-1.500v8.500l-4.500 3l-2-1v-7z" fill="#6cc12f"/><path d="M5 0.700l2-0.700v8.500l-2 1.300z" fill="#3f8f1c"/><path d="M0.500 3.500l2-2v9.800l-2-0.900z" fill="#a5e05e"/></svg>
<div class="ui f" style="left:899px;top:434px;color:#111;letter-spacing:-0.33px;z-index:24">.% в группе иерархии</div>
<svg style="left:881px;top:454px;z-index:23" width="8" height="12" viewBox="0 0 8 12"><path d="M2.500 1.500l4.500-1.500v8.500l-4.500 3l-2-1v-7z" fill="#6cc12f"/><path d="M5 0.700l2-0.700v8.500l-2 1.300z" fill="#3f8f1c"/><path d="M0.500 3.500l2-2v9.800l-2-0.900z" fill="#a5e05e"/></svg>
<div class="ui f" style="left:899px;top:453px;color:#111;letter-spacing:-0.33px;z-index:24">.% в группе иерархии колонки или точки</div>
<svg style="left:881px;top:473px;z-index:23" width="8" height="12" viewBox="0 0 8 12"><path d="M2.500 1.500l4.500-1.500v8.500l-4.500 3l-2-1v-7z" fill="#6cc12f"/><path d="M5 0.700l2-0.700v8.500l-2 1.300z" fill="#3f8f1c"/><path d="M0.500 3.500l2-2v9.800l-2-0.900z" fill="#a5e05e"/></svg>
<div class="ui f" style="left:899px;top:472px;color:#111;letter-spacing:-0.33px;z-index:24">.% в группе иерархии строки или серии</div>
<svg style="left:881px;top:492px;z-index:23" width="8" height="12" viewBox="0 0 8 12"><path d="M2.500 1.500l4.500-1.500v8.500l-4.500 3l-2-1v-7z" fill="#6cc12f"/><path d="M5 0.700l2-0.700v8.500l-2 1.300z" fill="#3f8f1c"/><path d="M0.500 3.500l2-2v9.800l-2-0.900z" fill="#a5e05e"/></svg>
<div class="ui f" style="left:899px;top:491px;color:#111;letter-spacing:-0.33px;z-index:24">.% в группировке</div>
<svg style="left:881px;top:511px;z-index:23" width="8" height="12" viewBox="0 0 8 12"><path d="M2.500 1.500l4.500-1.500v8.500l-4.500 3l-2-1v-7z" fill="#6cc12f"/><path d="M5 0.700l2-0.700v8.500l-2 1.300z" fill="#3f8f1c"/><path d="M0.500 3.500l2-2v9.800l-2-0.900z" fill="#a5e05e"/></svg>
<div class="ui f" style="left:899px;top:510px;color:#111;letter-spacing:-0.33px;z-index:24">.% в группировке колонки или точки</div>
<svg style="left:881px;top:530px;z-index:23" width="8" height="12" viewBox="0 0 8 12"><path d="M2.500 1.500l4.500-1.500v8.500l-4.500 3l-2-1v-7z" fill="#6cc12f"/><path d="M5 0.700l2-0.700v8.500l-2 1.300z" fill="#3f8f1c"/><path d="M0.500 3.500l2-2v9.800l-2-0.900z" fill="#a5e05e"/></svg>
<div class="ui f" style="left:899px;top:529px;color:#111;letter-spacing:-0.33px;z-index:24">.% в группировке строки или серии</div>
<svg style="left:881px;top:549px;z-index:23" width="8" height="12" viewBox="0 0 8 12"><path d="M2.500 1.500l4.500-1.500v8.500l-4.500 3l-2-1v-7z" fill="#6cc12f"/><path d="M5 0.700l2-0.700v8.500l-2 1.300z" fill="#3f8f1c"/><path d="M0.500 3.500l2-2v9.800l-2-0.900z" fill="#a5e05e"/></svg>
<div class="ui f" style="left:899px;top:548px;color:#111;letter-spacing:-0.33px;z-index:24">.% в колонке или точке</div>
<svg style="left:881px;top:568px;z-index:23" width="8" height="12" viewBox="0 0 8 12"><path d="M2.500 1.500l4.500-1.500v8.500l-4.500 3l-2-1v-7z" fill="#6cc12f"/><path d="M5 0.700l2-0.700v8.500l-2 1.300z" fill="#3f8f1c"/><path d="M0.500 3.500l2-2v9.800l-2-0.900z" fill="#a5e05e"/></svg>
<div class="ui f" style="left:899px;top:567px;color:#111;letter-spacing:-0.33px;z-index:24">.% в строке или серии</div>
<svg style="left:881px;top:587px;z-index:23" width="8" height="12" viewBox="0 0 8 12"><path d="M2.500 1.500l4.500-1.500v8.500l-4.500 3l-2-1v-7z" fill="#6cc12f"/><path d="M5 0.700l2-0.700v8.500l-2 1.300z" fill="#3f8f1c"/><path d="M0.500 3.500l2-2v9.800l-2-0.900z" fill="#a5e05e"/></svg>
<div class="ui f" style="left:899px;top:586px;color:#111;letter-spacing:-0.33px;z-index:24">.% общий</div>
<svg style="left:842px;top:607px;z-index:23" width="9" height="9" viewBox="0 0 9 9"><circle cx="4.500" cy="4.500" r="4" fill="#fff" stroke="#bcbcbc" stroke-width="0.900"/><path d="M2.500 4.500h4M4.500 2.500v4" stroke="#777" stroke-width="1"/></svg>
<svg style="left:862px;top:606px;z-index:23" width="8" height="12" viewBox="0 0 8 12"><path d="M2.500 1.500l4.500-1.500v8.500l-4.500 3l-2-1v-7z" fill="#6cc12f"/><path d="M5 0.700l2-0.700v8.500l-2 1.300z" fill="#3f8f1c"/><path d="M0.500 3.500l2-2v9.800l-2-0.900z" fill="#a5e05e"/></svg>
<div class="ui f" style="left:880px;top:605px;color:#111;z-index:24">По производственному календарю</div>
<div style="left:835px;top:623px;width:781px;height:11px;overflow:hidden;z-index:23">
<svg style="left:7px;top:3px" width="9" height="9" viewBox="0 0 9 9"><circle cx="4.500" cy="4.500" r="4" fill="#fff" stroke="#bcbcbc" stroke-width="0.900"/><path d="M2.500 4.500h4M4.500 2.500v4" stroke="#777" stroke-width="1"/></svg>
<svg style="left:26px;top:3px" width="12" height="10" viewBox="0 0 12 10"><path d="M0.500 1.500h4l1 1.500h6v6.500h-11z" fill="#f3d98b" stroke="#d2b25a" stroke-width="0.800"/></svg>
<div class="ui f" style="left:45px;top:1px;color:#111">Системные поля</div>
</div>
<div style="left:869px;top:431px;width:259px;height:173px;border:5px solid #000;z-index:25"></div>
<div style="left:1487px;top:640px;width:70px;height:20px;border:1px solid #b5ab82;border-radius:3px;background:linear-gradient(#fdfbf0,#f1ebd0);box-shadow:inset 0 0 0 1px #e6dfbf;z-index:22"></div>
<div class="ui f" style="left:1487px;top:643px;width:70px;text-align:center;color:#4a3a10;z-index:23">OK</div>
<div style="left:1563px;top:640px;width:70px;height:20px;border:1px solid #b5ab82;border-radius:3px;background:linear-gradient(#fdfbf0,#f1ebd0);z-index:22"></div>
<div class="ui f" style="left:1563px;top:643px;width:70px;text-align:center;color:#4a3a10;z-index:23">Отмена</div>
<!-- ============ icons in settings dialog ============ -->
<svg width="0" height="0" style="left:0;top:0"><defs>
<linearGradient id="barg" x1="0" y1="0" x2="0" y2="1"><stop offset="0" stop-color="#c4d8ea"/><stop offset="1" stop-color="#6f93b5"/></linearGradient>
</defs></svg>
<svg style="left:1777px;top:208px;z-index:12" width="16" height="16" viewBox="0 0 16 16"><g><rect x="0.500" y="3.500" width="4" height="12" fill="#f4f7fa" stroke="#aab6c4"/><path d="M2.500 6v9" stroke="#8fa0b5" stroke-dasharray="1 1.500"/><rect x="6.500" y="0.500" width="9" height="3" rx="1.500" fill="url(#barg)" stroke="#6a87a6" stroke-width="0.800"/><rect x="6.500" y="5.500" width="9" height="3" rx="1.500" fill="url(#barg)" stroke="#6a87a6" stroke-width="0.800"/><rect x="6.500" y="10.500" width="9" height="3" rx="1.500" fill="url(#barg)" stroke="#6a87a6" stroke-width="0.800"/><path d="M0 15.500h15" stroke="#5d6f86"/></g></svg>
<svg style="left:1801px;top:208px;z-index:12" width="16" height="16" viewBox="0 0 16 16"><g><rect x="0.500" y="4.500" width="4" height="11" fill="#f4f7fa" stroke="#aab6c4"/><rect x="5.500" y="4.500" width="4" height="11" fill="#f4f7fa" stroke="#aab6c4"/><rect x="10.500" y="4.500" width="4" height="11" fill="#f4f7fa" stroke="#aab6c4"/><path d="M2.500 7v8M7.500 7v8M12.500 7v8" stroke="#8fa0b5" stroke-width="1" stroke-dasharray="1 1.500"/><path d="M0 15.500h15" stroke="#5d6f86"/></g><path d="M2 0.500h12l-4.500 5.500v6l-3 0v-6z" fill="#d9dcdf" stroke="#7d8790" stroke-width="0.900"/><path d="M2 0.500h12" stroke="#666" stroke-width="1.200"/></svg>
<svg style="left:1849px;top:208px;z-index:12" width="16" height="16" viewBox="0 0 16 16"><g><rect x="0.500" y="4.500" width="4" height="11" fill="#f4f7fa" stroke="#aab6c4"/><rect x="5.500" y="4.500" width="4" height="11" fill="#f4f7fa" stroke="#aab6c4"/><rect x="10.500" y="4.500" width="4" height="11" fill="#f4f7fa" stroke="#aab6c4"/><path d="M2.500 7v8M7.500 7v8M12.500 7v8" stroke="#8fa0b5" stroke-width="1" stroke-dasharray="1 1.500"/><path d="M0 15.500h15" stroke="#5d6f86"/></g><path d="M2 9l6-6" stroke="#d79a2b" stroke-width="3.400" stroke-linecap="round"/><path d="M8 3l2.500-2.500" stroke="#222" stroke-width="3" stroke-linecap="round"/><path d="M10.500 1.500l3 3" stroke="#5a6f9a" stroke-width="1.200"/></svg>
<svg style="left:1873px;top:208px;z-index:12" width="16" height="16" viewBox="0 0 16 16"><g><rect x="0.500" y="4.500" width="4" height="11" fill="#f4f7fa" stroke="#aab6c4"/><rect x="5.500" y="4.500" width="4" height="11" fill="#f4f7fa" stroke="#aab6c4"/><rect x="10.500" y="4.500" width="4" height="11" fill="#f4f7fa" stroke="#aab6c4"/><path d="M2.500 7v8M7.500 7v8M12.500 7v8" stroke="#8fa0b5" stroke-width="1" stroke-dasharray="1 1.500"/><path d="M0 15.500h15" stroke="#5d6f86"/></g><g><circle cx="11.500" cy="4.500" r="3" fill="none" stroke="#9a9a9a" stroke-width="2.400" stroke-dasharray="1.600 0.900"/><circle cx="11.500" cy="4.500" r="2.600" fill="#b5b5b5" stroke="#8c8c8c" stroke-width="0.800"/><circle cx="11.500" cy="4.500" r="1.100" fill="#f1f1f1"/></g></svg>
<svg style="left:1873px;top:246px;z-index:12" width="16" height="16" viewBox="0 0 16 16"><g><rect x="0.500" y="4.500" width="4" height="11" fill="#f4f7fa" stroke="#aab6c4"/><rect x="5.500" y="4.500" width="4" height="11" fill="#f4f7fa" stroke="#aab6c4"/><rect x="10.500" y="4.500" width="4" height="11" fill="#f4f7fa" stroke="#aab6c4"/><path d="M2.500 7v8M7.500 7v8M12.500 7v8" stroke="#8fa0b5" stroke-width="1" stroke-dasharray="1 1.500"/><path d="M0 15.500h15" stroke="#5d6f86"/></g><g><circle cx="11.500" cy="4.500" r="3" fill="none" stroke="#9a9a9a" stroke-width="2.400" stroke-dasharray="1.600 0.900"/><circle cx="11.500" cy="4.500" r="2.600" fill="#b5b5b5" stroke="#8c8c8c" stroke-width="0.800"/><circle cx="11.500" cy="4.500" r="1.100" fill="#f1f1f1"/></g></svg>
<svg style="left:1777px;top:265px;z-index:12" width="16" height="16" viewBox="0 0 16 16"><g><rect x="0.500" y="3.500" width="4" height="12" fill="#f4f7fa" stroke="#aab6c4"/><path d="M2.500 6v9" stroke="#8fa0b5" stroke-dasharray="1 1.500"/><rect x="6.500" y="0.500" width="9" height="3" rx="1.500" fill="url(#barg)" stroke="#6a87a6" stroke-width="0.800"/><rect x="6.500" y="5.500" width="9" height="3" rx="1.500" fill="url(#barg)" stroke="#6a87a6" stroke-width="0.800"/><rect x="6.500" y="10.500" width="9" height="3" rx="1.500" fill="url(#barg)" stroke="#6a87a6" stroke-width="0.800"/><path d="M0 15.500h15" stroke="#5d6f86"/></g></svg>

<!-- right toolbar column -->
<svg style="left:1899px;top:209px;z-index:12" width="17" height="17" viewBox="0 0 17 17"><rect x="4.500" y="2.500" width="10" height="3" rx="1.500" fill="url(#barg)" stroke="#6a87a6" stroke-width="0.800"/><rect x="4.500" y="7.500" width="10" height="3" rx="1.500" fill="url(#barg)" stroke="#6a87a6" stroke-width="0.800"/><rect x="4.500" y="12.500" width="10" height="3" rx="1.500" fill="url(#barg)" stroke="#6a87a6" stroke-width="0.800"/><path d="M0.500 4h7M4 0.500v7" stroke="#2f9a2f" stroke-width="2.200"/></svg>
<div style="left:1907px;top:228px;width:0;height:0;border-top:3px solid transparent;border-bottom:3px solid transparent;border-right:4px solid #222;z-index:12"></div>
<svg style="left:1901px;top:243px;z-index:12" width="14" height="13" viewBox="0 0 14 13"><path d="M1 12l1-4l7.500-7l3 3l-7.500 7z" fill="#b9c9ae" stroke="#a9b8a0" stroke-width="0.800"/><path d="M1 12l1-4l3 3z" fill="#cfcfc4"/></svg>
<svg style="left:1901px;top:266px;z-index:12" width="13" height="12" viewBox="0 0 13 12"><path d="M1.500 1.500l10 9M11.500 1.500l-10 9" stroke="#c9b8b4" stroke-width="2.600" stroke-linecap="round"/></svg>
<svg style="left:1900px;top:287px;z-index:12" width="16" height="16" viewBox="0 0 16 16"><rect x="0.500" y="0.500" width="11" height="12" fill="#fff" stroke="#a9b4c6"/><path d="M2 3.500h4M2 5.500h5M2 7.500h7M2 9.500h7" stroke="#9db4d3" stroke-width="1"/><path d="M5 2.500l7 8" stroke="#4a5a7a" stroke-width="1.500"/><path d="M11.500 10l3 3.500" stroke="#8a4a2a" stroke-width="2"/><circle cx="9.500" cy="1.800" r="0.900" fill="#e0483a"/><circle cx="13" cy="3" r="0.900" fill="#e0483a"/><circle cx="12.200" cy="6.500" r="0.800" fill="#e77"/></svg>
<svg style="left:1901px;top:310px;z-index:12" width="13" height="13" viewBox="0 0 14 13"><path d="M7 0.500l6.500 6h-3.500v6h-6v-6h-3.500z" fill="#b5c2cd" stroke="#a3b0bb" stroke-width="0.800"/></svg>
<svg style="left:1901px;top:334px;z-index:12" width="13" height="12" viewBox="0 0 14 13"><path d="M7 12.500l6.500-6h-3.500v-6h-6v6h-3.500z" fill="#b5c2cd" stroke="#a3b0bb" stroke-width="0.800"/></svg>
<i class="h" style="left:1898px;top:353px;width:19px;background:#d8d2b6;z-index:12"></i>
<svg style="left:1900px;top:359px;z-index:12" width="17" height="17" viewBox="0 0 17 17"><rect x="0.500" y="0.500" width="11" height="13" fill="#fff" stroke="#8c99ad"/><path d="M2 7.500h8M2 9.500h8M2 11.500h5" stroke="#b3c3d9"/><path d="M9.500 8c0.500-3.500-2-5-5.500-4.500" fill="none" stroke="#222" stroke-width="1.500"/><path d="M5 1l-3.200 2.600l3.600 1.800z" fill="#222"/><path d="M6 16.500l4.500-5l4.500 5z" fill="#f6cf4a" stroke="#c99a1a" stroke-width="0.600"/></svg>
<svg style="left:1900px;top:382px;z-index:12" width="17" height="18" viewBox="0 0 17 18"><rect x="0.500" y="5.500" width="6" height="7" fill="#e4edf7" stroke="#7f93b0"/><path d="M2 8h3M2 10h3" stroke="#9fb4cf"/><rect x="7.500" y="4.500" width="8" height="8" fill="#f6e3a0" stroke="#c9a84a"/><path d="M11.500 8v-5" stroke="#111" stroke-width="1.800"/><path d="M8.500 4l3-3.500l3 3.500z" fill="#111"/><path d="M6.500 12.500h9l-4.500 2.500z" fill="#f6cf4a"/><path d="M6 17.500l5-3.500l5 3.500z" fill="#f6cf4a" stroke="#c99a1a" stroke-width="0.600"/></svg>
<svg style="left:1900px;top:406px;z-index:12" width="17" height="18" viewBox="0 0 17 18"><rect x="0.500" y="1.500" width="6" height="8" fill="#e4edf7" stroke="#7f93b0"/><path d="M2 4h3M2 6h3" stroke="#9fb4cf"/><rect x="6.500" y="1.500" width="9" height="9" rx="1" fill="#6f95c4" stroke="#4a6e9e"/><rect x="8.500" y="1.500" width="5" height="3.500" fill="#eef3f8"/><rect x="8.500" y="7" width="5" height="3.500" fill="#dfe7f0"/><path d="M6.500 11.500h9l-4.500 2z" fill="#f6cf4a"/><path d="M6 17.500l5-4.500l5 4.500z" fill="#f6cf4a" stroke="#c99a1a" stroke-width="0.600"/></svg>

<!-- lower-right column icons -->
<svg style="left:1893px;top:510px;z-index:12" width="17" height="17" viewBox="0 0 17 17"><defs><radialGradient id="gp" cx="0.400" cy="0.300" r="0.800"><stop offset="0" stop-color="#b9e59a"/><stop offset="1" stop-color="#4d9a2c"/></radialGradient></defs><circle cx="8.500" cy="8.500" r="7.500" fill="url(#gp)" stroke="#8aa77a"/><path d="M4.500 8.500h8M8.500 4.500v8" stroke="#fff" stroke-width="2.200"/></svg>
<svg style="left:1896px;top:537px;z-index:12" width="12" height="12" viewBox="0 0 12 12"><path d="M1.800 1.800l8.400 8.400M10.200 1.800l-8.400 8.400" stroke="#e2675e" stroke-width="2.400" stroke-linecap="round"/></svg>
<svg style="left:1894px;top:557px;z-index:12" width="15" height="14" viewBox="0 0 15 14"><path d="M7.500 0.800l6.500 6.200h-3.500v6h-6v-6h-3.500z" fill="#8fc4ee" stroke="#3f7fb8" stroke-width="1"/></svg>
<svg style="left:1894px;top:581px;z-index:12" width="15" height="14" viewBox="0 0 15 14"><path d="M7.500 13.200l6.500-6.200h-3.500v-6h-6v6h-3.500z" fill="#b5c2cd" stroke="#a3b0bb" stroke-width="0.800"/></svg>
<i class="h" style="left:1892px;top:601px;width:19px;background:#d8d2b6;z-index:12"></i>
<div class="ui" style="left:1895px;top:607px;z-index:12;color:#333;transform-origin:0 0;transform:translate(14px,0) rotate(90deg)">Подробно</div>

</body></html>
